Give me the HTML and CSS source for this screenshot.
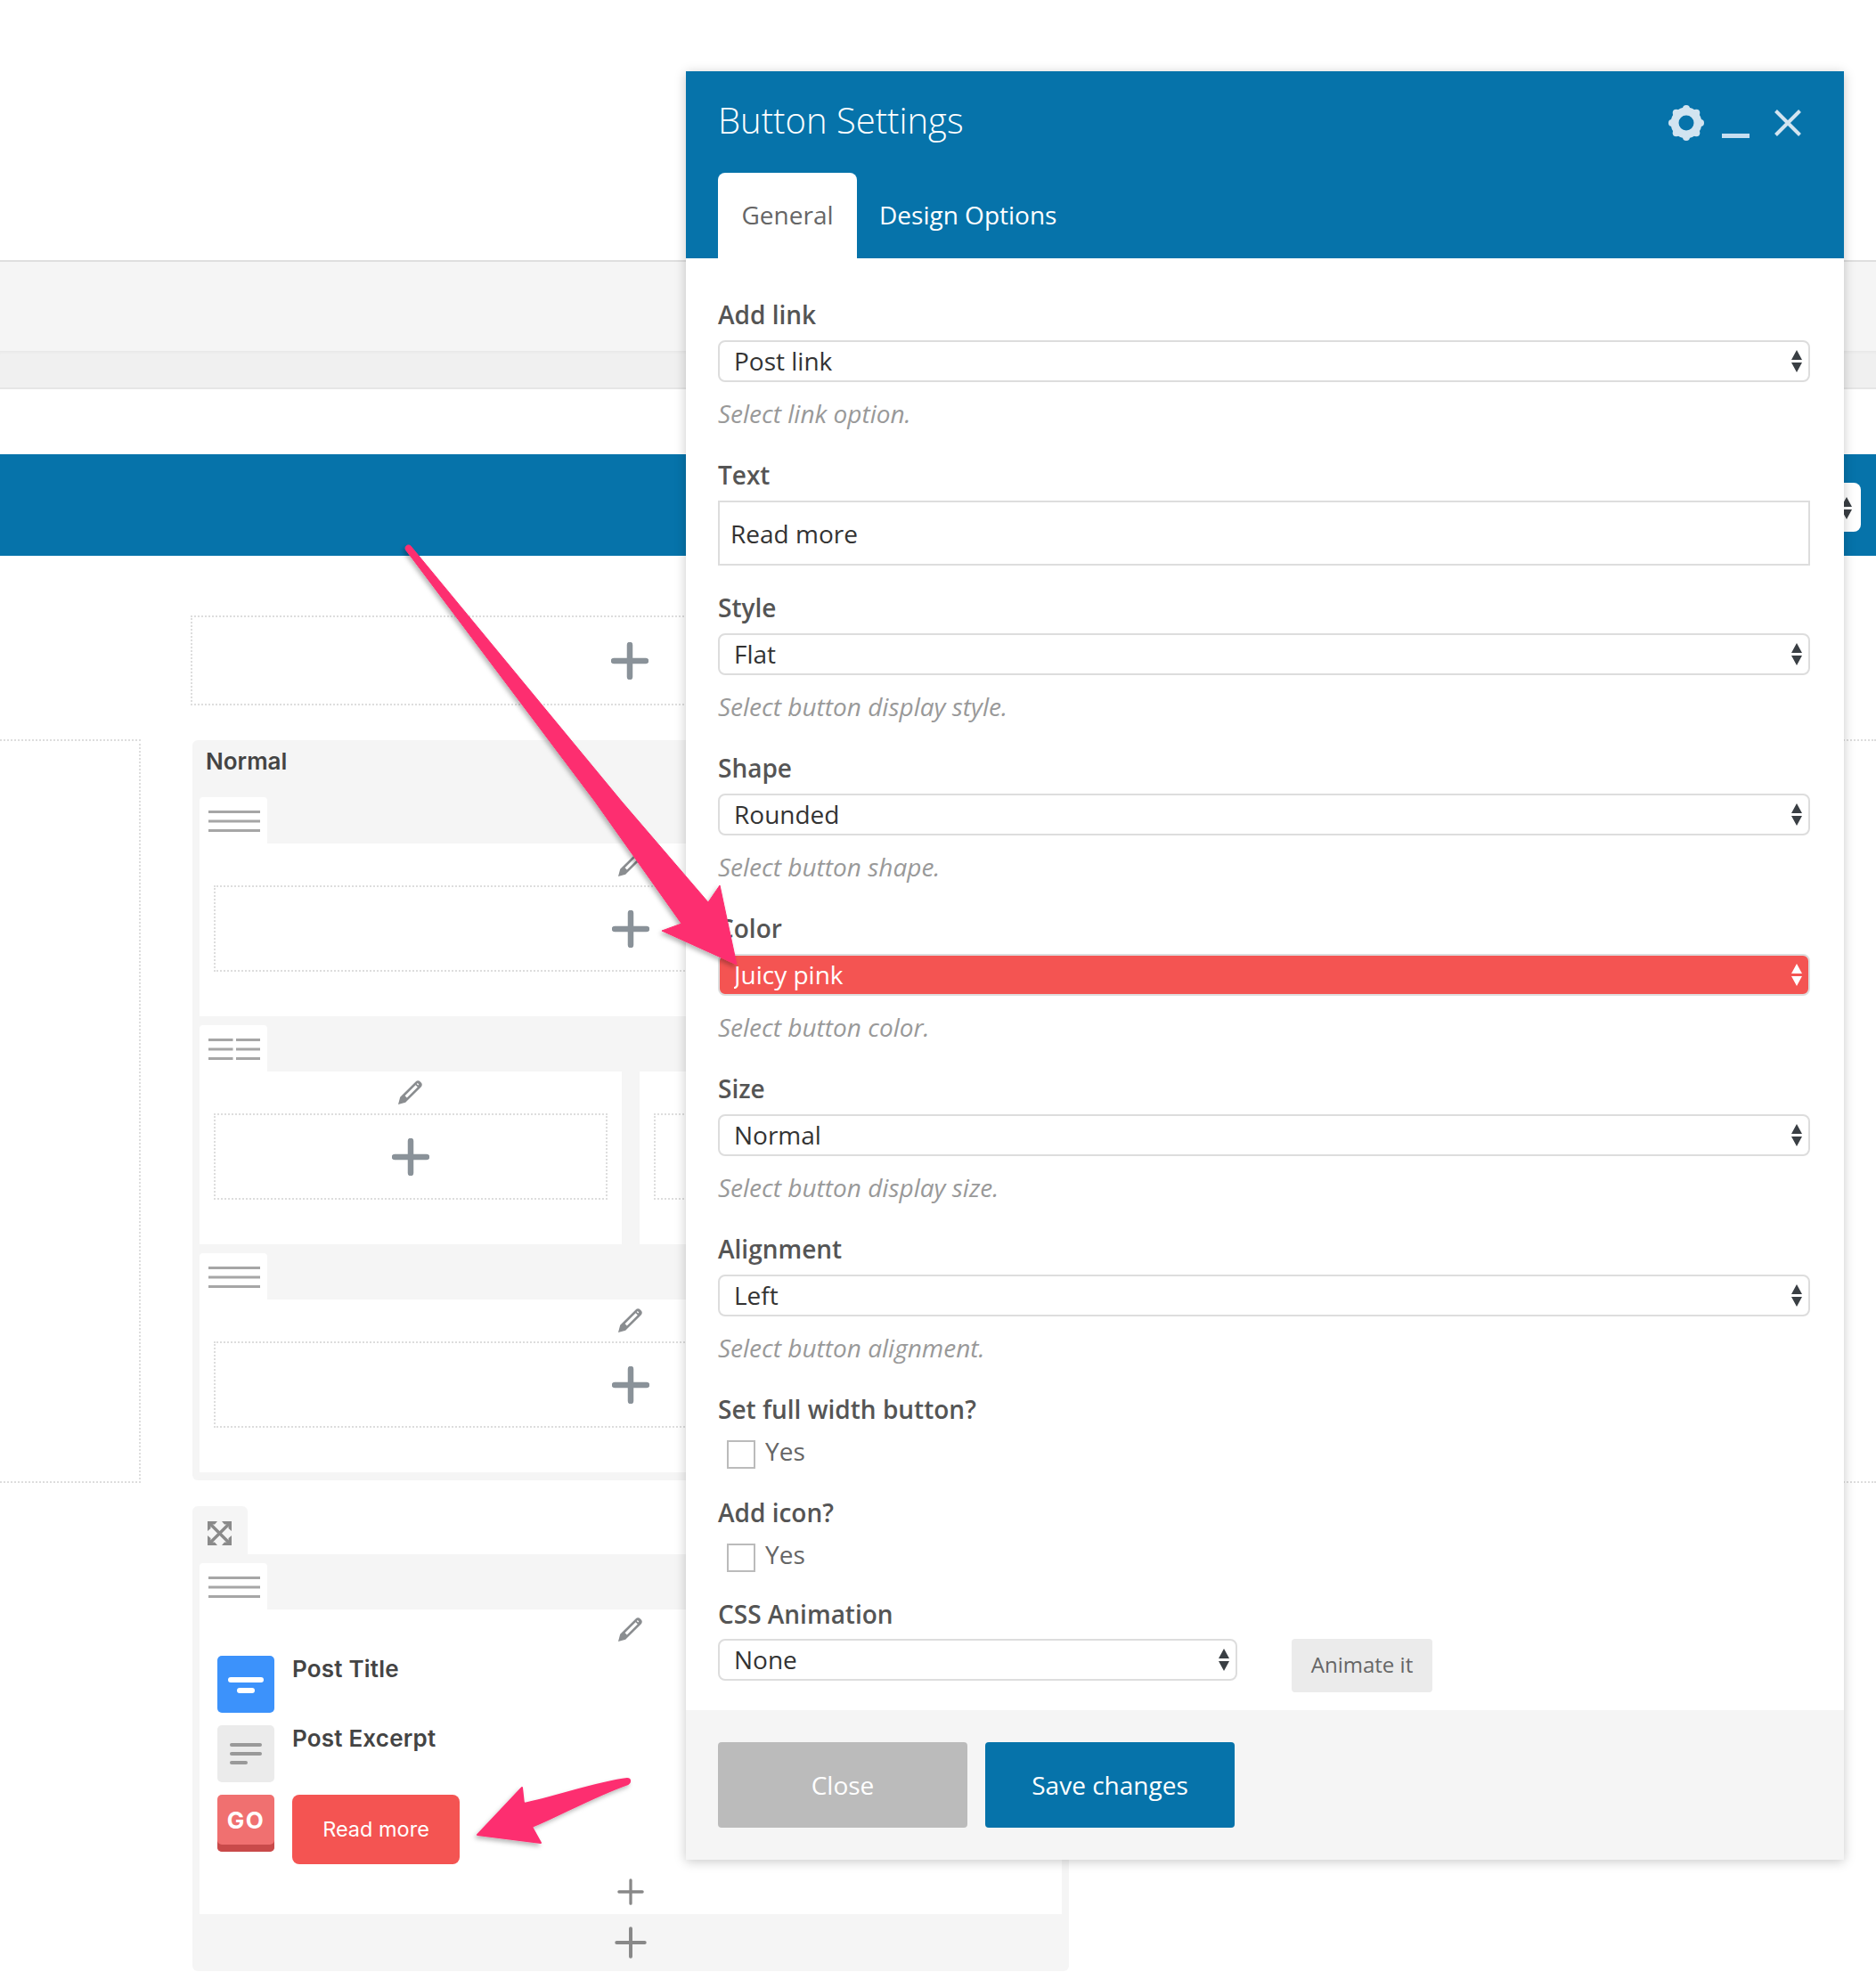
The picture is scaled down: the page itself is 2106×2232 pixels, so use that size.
FILE: index.html
```html
<!DOCTYPE html>
<html lang="en">
<head>
<meta charset="utf-8">
<title>Button Settings</title>
<link rel="stylesheet" href="styles.css">
</head>
<body>
<svg class="defs" width="0" height="0" aria-hidden="true">
  <symbol id="plus-bold" viewBox="0 0 42 42"><path d="M21 3v36M3 21h36" fill="none" stroke="#8a9299" stroke-width="6.5" stroke-linecap="round"/></symbol>
  <symbol id="plus-thin" viewBox="0 0 32 32"><path d="M16 2v28M2 16h28" fill="none" stroke="#888" stroke-width="3.5" stroke-linecap="round"/></symbol>
  <symbol id="pencil" viewBox="0 0 28 28"><path fill-rule="evenodd" fill="#8a8d90" d="M0 28l2.2-8.2L19.6 2.4c1.6-1.6 3.6-1.6 5.2 0l.8.8c1.6 1.6 1.6 3.6 0 5.2L8.2 25.8zM19.6 6.2L7.6 18.2l2.2 2.2 12-12zM21.8 3.9l-1 1 1.5 1.5 1-1z"/></symbol>
  <symbol id="lines-one" viewBox="0 0 58 24"><path d="M0 1.5h58M0 12h58M0 22.5h58" stroke="#a6a6a6" stroke-width="3"/></symbol>
  <symbol id="lines-two" viewBox="0 0 58 24"><path d="M0 1.5h27.500M31 1.500h27M0 12h27.500M31 12h27M0 22.500h27.500M31 22.500h27" stroke="#a6a6a6" stroke-width="3"/></symbol>
  <symbol id="updown" viewBox="0 0 12 25"><path d="M6 0l6 11H0zM0 14h12L6 25z"/></symbol>
</svg>

<header class="top-blank"></header>
<div class="band-light"></div>
<div class="band-mid"></div>
<div class="band-white"></div>
<div class="band-blue">
  <div class="band-select"><svg class="updown-dark band-arrows"><use href="#updown"/></svg></div>
</div>

<main class="builder">
  <aside class="gutter"></aside>

  <section class="main-col">
    <div class="drop-box top-drop"><svg class="plus"><use href="#plus-bold"/></svg></div>

    <div class="panel">
      <div class="panel-title">Normal</div>

      <div class="row">
        <div class="row-tab"><svg class="lines"><use href="#lines-one"/></svg></div>
        <div class="row-body">
          <svg class="pencil"><use href="#pencil"/></svg>
          <div class="drop-box inner-drop"><svg class="plus"><use href="#plus-bold"/></svg></div>
        </div>
      </div>

      <div class="row">
        <div class="row-tab"><svg class="lines"><use href="#lines-two"/></svg></div>
        <div class="cols">
          <div class="row-body">
            <svg class="pencil"><use href="#pencil"/></svg>
            <div class="drop-box inner-drop"><svg class="plus"><use href="#plus-bold"/></svg></div>
          </div>
          <div class="row-body">
            <svg class="pencil"><use href="#pencil"/></svg>
            <div class="drop-box inner-drop"><svg class="plus"><use href="#plus-bold"/></svg></div>
          </div>
        </div>
      </div>

      <div class="row">
        <div class="row-tab"><svg class="lines"><use href="#lines-one"/></svg></div>
        <div class="row-body">
          <svg class="pencil"><use href="#pencil"/></svg>
          <div class="drop-box inner-drop"><svg class="plus"><use href="#plus-bold"/></svg></div>
        </div>
      </div>
    </div>

    <div class="expand-tab">
      <svg class="expand" viewBox="0 0 27 27"><path fill="none" stroke="#8a8a8a" stroke-width="3.400" d="M3 3l21 21M24 3L3 24"/><path fill="#8a8a8a" d="M0 0h11L8 3.500H3.500V8L0 11zM27 0v11l-3.500-3V3.500H19L16 0zM0 27V16l3.500 3v4.500H8l3 3.500zM27 27H16l3-3.500h4.500V19l3.500-3z"/></svg>
    </div>
    <div class="panel panel-wide">
      <div class="row">
        <div class="row-tab"><svg class="lines"><use href="#lines-one"/></svg></div>
        <div class="row-body elements-body">
          <svg class="pencil element-pencil"><use href="#pencil"/></svg>
          <div class="element">
            <div class="el-icon el-blue"><span class="bar bar-w40"></span><span class="bar bar-w20"></span></div>
            <div class="el-title">Post Title</div>
          </div>
          <div class="element">
            <div class="el-icon el-gray"><span class="gbar gbar-long"></span><span class="gbar gbar-long"></span><span class="gbar gbar-short"></span></div>
            <div class="el-title">Post Excerpt</div>
          </div>
          <div class="element">
            <div class="el-icon el-go">GO</div>
            <a class="read-more">Read more</a>
          </div>
          <svg class="plus-small"><use href="#plus-thin"/></svg>
        </div>
      </div>
      <div class="panel-foot"><svg class="plus-foot"><use href="#plus-thin"/></svg></div>
    </div>
  </section>

  <aside class="gutter"></aside>
</main>

<section class="modal">
  <div class="modal-head">
    <div class="head-top">
      <h1 class="modal-title">Button Settings</h1>
      <div class="head-icons">
        <svg class="ic-gear" viewBox="0 0 40 40">
          <circle cx="20" cy="20" r="13" fill="none" stroke="#d2e4f0" stroke-width="9"/>
          <g fill="#d2e4f0"><circle cx="20" cy="4" r="4"/><circle cx="31.300" cy="8.700" r="4"/><circle cx="36" cy="20" r="4"/><circle cx="31.300" cy="31.300" r="4"/><circle cx="20" cy="36" r="4"/><circle cx="8.700" cy="31.300" r="4"/><circle cx="4" cy="20" r="4"/><circle cx="8.700" cy="8.700" r="4"/></g>
        </svg>
        <span class="ic-min"></span>
        <svg class="ic-close" viewBox="0 0 30 30"><path d="M1.500 1.500l27 27M28.500 1.500l-27 27" stroke="#d2e4f0" stroke-width="4" fill="none"/></svg>
      </div>
    </div>
    <nav class="tabs">
      <a class="tab tab-active">General</a>
      <a class="tab">Design Options</a>
    </nav>
  </div>

  <form class="modal-body">
    <div class="field">
      <label class="f-label">Add link</label>
      <div class="sel-wrap"><select class="sel"><option>Post link</option></select><svg class="updown-dark"><use href="#updown"/></svg></div>
      <p class="help">Select link option.</p>
    </div>
    <div class="field field-text">
      <label class="f-label">Text</label>
      <input class="txt" type="text" value="Read more">
    </div>
    <div class="field">
      <label class="f-label">Style</label>
      <div class="sel-wrap"><select class="sel"><option>Flat</option></select><svg class="updown-dark"><use href="#updown"/></svg></div>
      <p class="help">Select button display style.</p>
    </div>
    <div class="field">
      <label class="f-label">Shape</label>
      <div class="sel-wrap"><select class="sel"><option>Rounded</option></select><svg class="updown-dark"><use href="#updown"/></svg></div>
      <p class="help">Select button shape.</p>
    </div>
    <div class="field">
      <label class="f-label">Color</label>
      <div class="sel-wrap"><select class="sel sel-red"><option>Juicy pink</option></select><svg class="updown-light"><use href="#updown"/></svg></div>
      <p class="help">Select button color.</p>
    </div>
    <div class="field">
      <label class="f-label">Size</label>
      <div class="sel-wrap"><select class="sel"><option>Normal</option></select><svg class="updown-dark"><use href="#updown"/></svg></div>
      <p class="help">Select button display size.</p>
    </div>
    <div class="field">
      <label class="f-label">Alignment</label>
      <div class="sel-wrap"><select class="sel"><option>Left</option></select><svg class="updown-dark"><use href="#updown"/></svg></div>
      <p class="help">Select button alignment.</p>
    </div>
    <div class="field-check">
      <label class="f-label">Set full width button?</label>
      <label class="check-line"><input class="cb" type="checkbox"><span>Yes</span></label>
    </div>
    <div class="field-check field-check-b">
      <label class="f-label">Add icon?</label>
      <label class="check-line"><input class="cb" type="checkbox"><span>Yes</span></label>
    </div>
    <div class="field-anim">
      <label class="f-label">CSS Animation</label>
      <div class="anim-line">
        <div class="sel-wrap sel-narrow"><select class="sel"><option>None</option></select><svg class="updown-dark"><use href="#updown"/></svg></div>
        <button class="animate" type="button">Animate it</button>
      </div>
    </div>
  </form>

  <div class="modal-foot">
    <button class="btn btn-close" type="button">Close</button>
    <button class="btn btn-save" type="button">Save changes</button>
  </div>
</section>

<svg class="annotations" viewBox="0 0 2106 2232" aria-hidden="true">
  <defs><filter id="arrow-shadow" x="-20%" y="-20%" width="140%" height="140%"><feDropShadow dx="-2" dy="3" stdDeviation="2.500" flood-color="#000" flood-opacity=".28"/></filter></defs>
  <g filter="url(#arrow-shadow)" fill="#fd2f70">
    <path stroke="#fd2f70" stroke-width="1" stroke-linejoin="round" d="M827 1083L808 994 795 1013 698 900 461 613C458 610 453 614 456 618L668 900 765 1037 743 1045z"/>
    <path stroke="#fd2f70" stroke-width="2" stroke-linejoin="round" d="M536 2060L586 2007 588 2025C630 2016 670 2001 704 1997 708 1997 708 2001 705 2003 665 2017 625 2040 597 2051L607 2069z"/>
  </g>
</svg>
</body>
</html>
```
FILE: styles.css
```css
* { box-sizing: border-box; }
html, body { margin: 0; padding: 0; }
body {
  position: relative;
  width: 2106px;
  height: 2232px;
  overflow: hidden;
  background: #fff;
  font-family: "Open Sans", sans-serif;
}
.defs { position: absolute; }

.top-blank { height: 294px; border-bottom: 2px solid #dfdfdf; }
.band-light { height: 100px; background: #f5f5f5; }
.band-mid { height: 43px; background: #f0f0f0; border-bottom: 2px solid #e6e6e6; box-shadow: inset 0 4px 4px -3px rgba(0,0,0,.05); }
.band-white { height: 73px; }
.band-blue { height: 114px; background: #0673aa; display: flex; justify-content: flex-end; padding: 32px 17px 0 0; }
.band-select { position: relative; width: 60px; height: 55px; background: #fff; border-radius: 8px; }

.builder {
  display: grid;
  grid-template-columns: 158px 984px 1fr;
  column-gap: 58px;
  align-items: start;
}
.gutter {
  height: 835px;
  margin-top: 206px;
  border: 2px dotted #ddd;
}
.gutter:first-child { border-left: 0; }
.gutter:last-child { border-right: 0; }
.main-col { padding-top: 67px; }

.drop-box {
  border: 2px dotted #ddd;
  display: flex;
  align-items: center;
  justify-content: center;
}
.top-drop { height: 101px; margin: 0 0 39px -2px; width: 986px; }
.inner-drop { height: 97px; margin: 10px 16px 0; align-self: stretch; }
.plus { width: 42px; height: 42px; }

.panel {
  background: #f5f5f5;
  border-radius: 6px;
  padding: 0 8px 9px;
  display: flex;
  flex-direction: column;
  gap: 0;
}
.panel > .row + .row { margin-top: 10px; }
.panel-title {
  height: 64px;
  padding: 5px 3px 0 7px;
  font: 600 26px/38px Inter, sans-serif;
  color: #444;
}
.row { display: flex; flex-direction: column; }
.row-tab {
  width: 76px;
  height: 52px;
  background: #fff;
  border-radius: 4px 4px 0 0;
  padding: 15px 0 0 10px;
}
.lines { display: block; width: 58px; height: 24px; }
.row-body {
  height: 194px;
  background: #fff;
  display: flex;
  flex-direction: column;
  align-items: center;
}
.cols { display: flex; gap: 20px; }
.cols .row-body { flex: 1; }
.pencil { width: 28px; height: 28px; margin-top: 9px; flex: none; }

.expand-tab {
  width: 62px;
  height: 54px;
  margin-top: 29px;
  background: #f5f5f5;
  border-radius: 6px 6px 0 0;
  padding: 17px 0 0 17px;
}
.expand { display: block; width: 27px; height: 27px; }
.panel-wide { padding: 10px 8px 0; border-top-left-radius: 0; }
.elements-body { height: 342px; align-items: stretch; padding: 0 0 0 20px; }
.element-pencil { align-self: center; margin: 8px 0 16px -20px; }
.element { display: flex; gap: 20px; margin-bottom: 14px; }
.el-icon {
  width: 64px;
  height: 64px;
  border-radius: 5px;
  flex: none;
  display: flex;
  flex-direction: column;
  align-items: center;
}
.el-blue { background: #3c92fb; padding-top: 24px; gap: 6px; }
.bar { display: block; height: 6px; border-radius: 3px; background: #fff; }
.bar-w40 { width: 40px; }
.bar-w20 { width: 20px; }
.el-gray { background: #ebebeb; padding: 20px 0 0 14px; gap: 6px; align-items: flex-start; }
.gbar { display: block; height: 4px; border-radius: 2px; background: #999; }
.gbar-long { width: 36px; }
.gbar-short { width: 20px; }
.el-go {
  background: #f07070;
  box-shadow: inset 0 -8px 0 #c94a4a;
  font: 700 26px/58px Inter, sans-serif;
  letter-spacing: 1.5px;
  color: #fff;
}
.el-title { padding-top: 0; font: 600 26px/30px Inter, sans-serif; letter-spacing: .2px; color: #444; }
.read-more {
  width: 188px;
  height: 78px;
  background: #f45452;
  border-radius: 8px;
  color: #fff;
  text-align: center;
  font: 400 23.5px/78px Inter, sans-serif;
}
.plus-small { width: 30px; height: 30px; align-self: center; margin: 2px 0 0 -20px; }
.panel-foot { height: 64px; display: flex; justify-content: center; padding-top: 14px; }
.plus-foot { width: 36px; height: 36px; }

/* modal */
.modal {
  position: absolute;
  left: 770px;
  top: 80px;
  width: 1300px;
  height: 2008px;
  display: flex;
  flex-direction: column;
  background: #fff;
  box-shadow: 0 2px 12px rgba(0,0,0,.22);
}
.modal-head { height: 210px; background: #0673aa; padding: 0 36px; flex: none; }
.head-top { height: 114px; display: flex; justify-content: space-between; }
.modal-title {
  margin: 28px 0 0;
  font: 300 40px/54px "Open Sans", sans-serif;
  color: #fff;
}
.head-icons { position: relative; width: 217px; margin-right: 10px; }
.ic-gear { position: absolute; left: 66px; top: 38px; width: 40px; height: 40px; }
.ic-min { position: absolute; left: 126px; top: 70px; width: 31px; height: 5px; background: #c6def0; }
.ic-close { position: absolute; left: 185px; top: 43px; width: 30px; height: 30px; }
.tabs { display: flex; }
.tab {
  height: 96px;
  padding: 0 25px;
  font: 400 28px/94px "Open Sans", sans-serif;
  color: #fff;
  white-space: nowrap;
}
.tab-active {
  width: 156px;
  background: #fff;
  color: #666;
  border-radius: 8px 8px 0 0;
  text-align: center;
  padding: 0;
}
.modal-body { flex: 1; padding: 44px 38px 0 36px; }
.f-label {
  display: block;
  height: 38px;
  font: 600 28px/38px "Open Sans", sans-serif;
  color: #555;
  margin-bottom: 10px;
}
.field { height: 180px; }
.field-text { height: 149px; }
.sel-wrap { position: relative; }
.sel {
  display: block;
  width: 100%;
  height: 47px;
  appearance: none;
  -webkit-appearance: none;
  background: #fff;
  border: 2px solid #ddd;
  border-radius: 8px;
  padding: 0 16px 2px;
  font: 400 28px "Open Sans", sans-serif;
  color: #333;
}
.sel-red { background: #f45452; color: #fff; }
.updown-dark, .updown-light {
  position: absolute;
  right: 9px;
  top: 11px;
  width: 12px;
  height: 25px;
}
.updown-dark { fill: #3a3f44; }
.updown-light { fill: #fff; }
.band-select .band-arrows { top: 16px; right: 10px; }
.help {
  margin: 16px 0 0;
  font: italic 400 28px/38px "Open Sans", sans-serif;
  color: #999;
}
.txt {
  display: block;
  width: 100%;
  height: 73px;
  border: 2px solid #ddd;
  padding: 0 12px;
  font: 400 28px "Open Sans", sans-serif;
  color: #333;
  background: #fff;
}
.field-check { height: 116px; }
.field-check-b { height: 114px; }
.f-label + .check-line { margin-top: 16px; }
.check-line { display: flex; gap: 11px; padding-left: 10px; font: 400 28px/32px "Open Sans", sans-serif; color: #666; }
.check-line span { margin-top: -4px; }
.cb {
  appearance: none;
  -webkit-appearance: none;
  margin: 0;
  width: 32px;
  height: 32px;
  border: 2px solid #bbb;
  background: #fff;
}
.anim-line { display: flex; align-items: flex-start; }
.field-anim .f-label { margin-bottom: 9px; }
.sel-narrow { width: 583px; margin-right: 61px; }
.animate {
  width: 158px;
  height: 60px;
  border: 0;
  border-radius: 4px;
  background: #ebebeb;
  color: #666;
  font: 400 24px "Open Sans", sans-serif;
  padding: 0 0 4px;
}
.modal-foot {
  flex: none;
  height: 168px;
  background: #f5f5f5;
  padding: 36px;
  display: flex;
  gap: 20px;
}
.btn {
  width: 280px;
  height: 96px;
  border: 0;
  border-radius: 4px;
  color: #fff;
  font: 400 28px "Open Sans", sans-serif;
}
.btn-close { background: #bbb; }
.btn-save { background: #0673aa; }

.annotations {
  position: absolute;
  left: 0;
  top: 0;
  width: 2106px;
  height: 2232px;
  pointer-events: none;
}
```
